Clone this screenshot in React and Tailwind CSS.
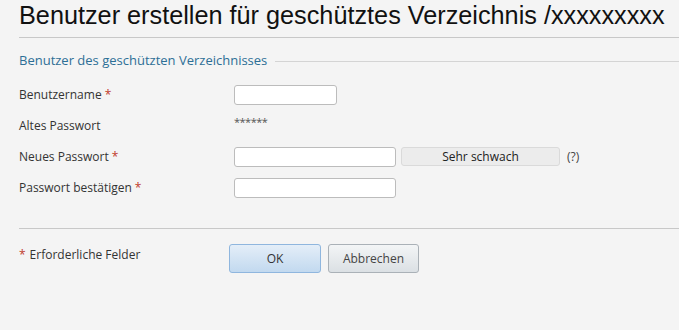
import React from 'react';

const labelCls = 'w-[215px] shrink-0 text-[12px] text-[#333]';
const inputCls = 'h-[20px] bg-white border border-[#bcbcbc] rounded-[3px] outline-none px-1 text-[12px]';

function Req() {
  return <span className="text-[#c0392b] ml-[3px]">*</span>;
}

function Row({ label, required, children }) {
  return (
    <div className="flex items-center h-[31px]">
      <div className={labelCls}>
        {label}
        {required && <Req />}
      </div>
      {children}
    </div>
  );
}

export default function App() {
  return (
    <div className="w-[679px] h-[330px] bg-[#f4f4f4] overflow-hidden pl-[19px]" style={{ fontFamily: '"Open Sans", "Liberation Sans", sans-serif' }}>
      <div className="h-[38px] border-b border-[#c8c8c8] pt-[1px]">
        <h1 className="text-[25.25px] leading-[29px] text-[#111] whitespace-nowrap" style={{ fontFamily: '"Liberation Sans", Arial, sans-serif' }}>
          Benutzer erstellen für geschütztes Verzeichnis /xxxxxxxxx
        </h1>
      </div>

      <div className="flex items-center h-[18px] mt-[14px]">
        <span className="text-[13px] text-[#2d6f96] whitespace-nowrap">Benutzer des geschützten Verzeichnisses</span>
        <div className="flex-1 h-px bg-[#d4d4d4] ml-[8px]" />
      </div>

      <div className="mt-[9px]">
        <Row label="Benutzername" required>
          <input className={`${inputCls} w-[103px]`} />
        </Row>
        <Row label="Altes Passwort">
          <span className="text-[11px] text-[#555] -mt-[6px] tracking-[-0.5px]">******</span>
        </Row>
        <Row label="Neues Passwort" required>
          <input type="password" className={`${inputCls} w-[162px]`} />
          <div className="ml-[5px] w-[159px] h-[19px] bg-[#ececec] border border-[#dadada] rounded-[3px] flex items-center justify-center text-[12px] text-[#222]">
            Sehr schwach
          </div>
          <span className="ml-[7px] text-[12px] text-[#444]">(?)</span>
        </Row>
        <Row label="Passwort bestätigen" required>
          <input type="password" className={`${inputCls} w-[162px]`} />
        </Row>
      </div>

      <div className="h-px bg-[#c8c8c8] mt-[25px]" />

      <div className="flex items-start mt-[15px]">
        <div className="w-[210px] shrink-0 text-[12px] text-[#333] pt-[2px]">
          <span className="text-[#c0392b] mr-[4px]">*</span>Erforderliche Felder
        </div>
        <button className="w-[92px] h-[29px] rounded-[3px] border border-[#8fb6de] bg-gradient-to-b from-[#e4eef8] to-[#c2d9ef] text-[12px] text-[#333]">
          OK
        </button>
        <button className="ml-[7px] w-[91px] h-[29px] rounded-[3px] border border-[#aab1b7] bg-gradient-to-b from-[#f3f5f6] to-[#dbe0e4] text-[12px] text-[#444]">
          Abbrechen
        </button>
      </div>
    </div>
  );
}
